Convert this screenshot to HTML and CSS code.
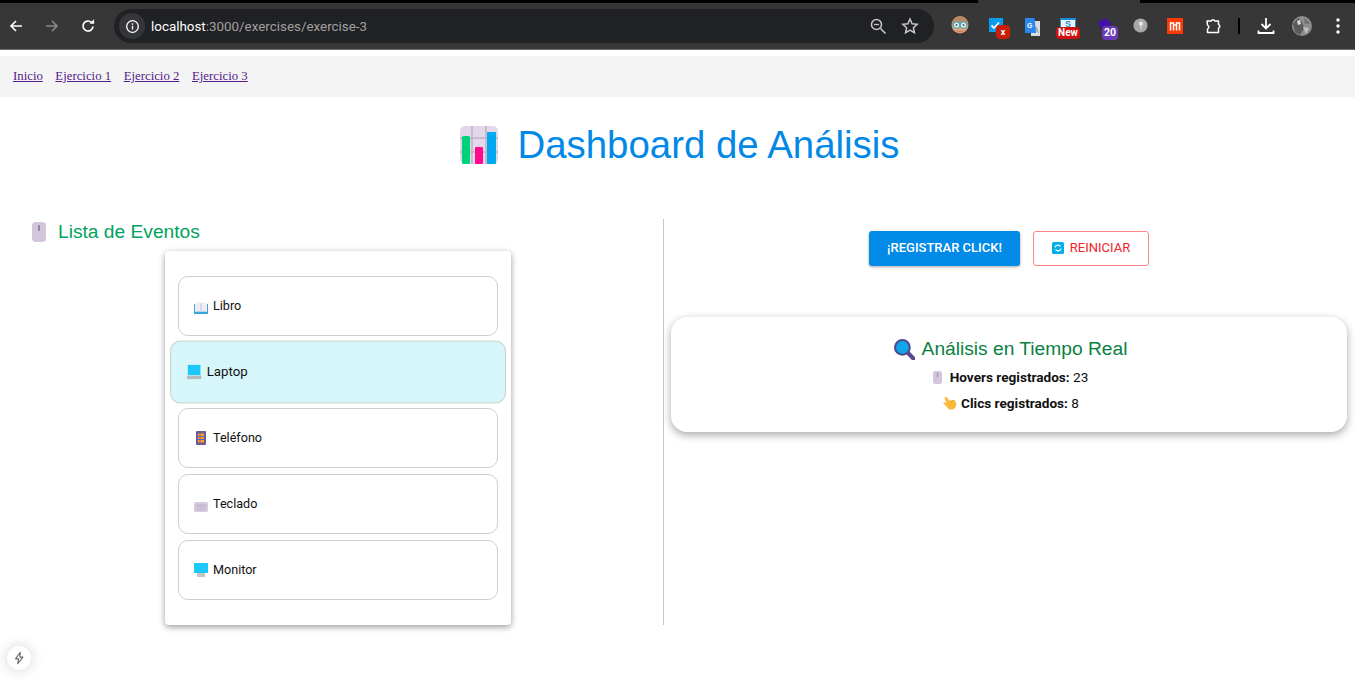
FILE: index.html
```html
<!DOCTYPE html>
<html lang="es">
<head>
<meta charset="utf-8">
<title>Dashboard de Análisis</title>
<link rel="stylesheet" href="styles.css">
</head>
<body>
<div class="chrome">
  <div class="topstrip"><span class="tab-gap"></span></div>
  <div class="toolbar">
    <svg class="nav-ic" viewBox="0 0 16 16"><path d="M14 8H3M8 3L3 8l5 5" fill="none" stroke="#fff" stroke-width="1.6"/></svg>
    <svg class="nav-ic forward" viewBox="0 0 16 16"><path d="M2 8h11M8 3l5 5-5 5" fill="none" stroke="#8a8a8a" stroke-width="1.6"/></svg>
    <svg class="nav-ic reload" viewBox="0 0 16 16"><path d="M13 8.500A5 5 0 1 1 11.500 4.400" fill="none" stroke="#fff" stroke-width="1.700"/><path d="M9.500 5.800h4.600V1.200z" fill="#fff"/></svg>
    <div class="omnibox">
      <span class="site-info"><svg viewBox="0 0 16 16" width="15" height="15"><circle cx="8" cy="8" r="6.200" fill="none" stroke="#fff" stroke-width="1.400"/><path d="M8 7.200v4M8 4.500v1.500" stroke="#fff" stroke-width="1.500"/></svg></span>
      <span class="url"><span class="host">localhost</span>:3000/exercises/exercise-3</span>
      <svg class="omni-ic" viewBox="0 0 18 18"><circle cx="7.500" cy="7.500" r="5" fill="none" stroke="#c7c7c7" stroke-width="1.500"/><path d="M11.500 11.500l5 5" stroke="#c7c7c7" stroke-width="1.600"/><path d="M5 7.500h5" stroke="#c7c7c7" stroke-width="1.300"/></svg>
      <svg class="omni-ic star" viewBox="0 0 18 18"><path d="M9 2l2.100 4.700 5.100.6-3.800 3.400 1 5L9 13.200l-4.400 2.500 1-5L1.800 7.300l5.100-.6z" fill="none" stroke="#c7c7c7" stroke-width="1.500"/></svg>
    </div>
    <div class="extensions">
      <svg class="ext ext-face" viewBox="0 0 18 18"><circle cx="9" cy="9" r="8.500" fill="#dd9f7d"/><path d="M1 8a8 8 0 0 1 16 0z" fill="#b78a68"/><path d="M1 9h16" stroke="#53a7b5"/><circle cx="5.500" cy="9" r="3.200" fill="#dff0f4" stroke="#53a7b5" stroke-width="1.200"/><circle cx="12.500" cy="9" r="3.200" fill="#dff0f4" stroke="#53a7b5" stroke-width="1.200"/><circle cx="5.500" cy="9" r="1" fill="#555"/><circle cx="12.500" cy="9" r="1" fill="#555"/><path d="M6 15c2 1 4 1 6 0" stroke="#c9724f" fill="none"/></svg>
      <span class="ext ext-check"><svg class="check-box" viewBox="0 0 14 14"><rect width="14" height="14" fill="#0b9bee"/><path d="M2.500 7.500l2.500 2.500 5-5.500" fill="none" stroke="#fff" stroke-width="1.800"/></svg><span class="badge badge-x">x</span></span>
      <svg class="ext ext-translate" viewBox="0 0 16 18"><rect x="7" y="3" width="9" height="15" fill="#d8dde0"/><path d="M9.500 15l2.500-6 2.500 6M10.500 13h3" stroke="#8d979d" fill="none"/><path d="M1 0h9.500L12 15H1z" fill="#2b86f0"/><text x="3" y="10" class="ext-g">G</text></svg>
      <span class="ext ext-new"><span class="new-top"><span class="new-s">S</span></span><span class="badge badge-new">New</span></span>
      <span class="ext ext-20"><svg class="gem" viewBox="0 0 18 14"><path d="M9 0l8 6-8 6-8-6z" fill="#4310a8"/><path d="M1 8l8 6 8-6-8 4z" fill="#2d1380"/></svg><span class="badge badge-20">20</span></span>
      <svg class="ext ext-pin" viewBox="0 0 16 16"><circle cx="8" cy="8" r="7.500" fill="#a7a7a7"/><circle cx="8.500" cy="6" r="2.200" fill="#e6e6e6"/><path d="M8.500 7v5" stroke="#e6e6e6"/></svg>
      <svg class="ext ext-red" viewBox="0 0 16 16"><rect width="16" height="16" fill="#f93a06"/><path d="M3.500 12.500V5h3v7.500M9.500 12.500V5h3v7.500M6.500 7h3" fill="none" stroke="#fff" stroke-width="1.500"/></svg>
      <svg class="ext ext-puzzle" viewBox="0 0 18 18"><path d="M3 4h4.200a1.900 1.900 0 0 1 3.600 0H14.500v3.500a1.900 1.900 0 0 1 0 3.600V15.500H3.500v-3.400a2.200 2.200 0 0 0 0-4z" fill="none" stroke="#fff" stroke-width="1.500" stroke-linejoin="round"/></svg>
      <span class="sep"></span>
      <svg class="ext ext-dl" viewBox="0 0 18 18"><path d="M9 1v10M4.500 7L9 11.500 13.500 7M1.500 13.500v2.500h15v-2.500" fill="none" stroke="#fff" stroke-width="1.800"/></svg>
      <svg class="ext ext-avatar" viewBox="0 0 20 20"><circle cx="10" cy="10" r="10" fill="#8d8d8d"/><path d="M1 8l5-6 4 4 2 6-4 7-5-3z" fill="#5a5a5a"/><path d="M5 5l3-1 1 4-3 1z" fill="#dcdcdc"/><path d="M11 11l6 1-3 6z" fill="#c2c2c2"/><path d="M12 2l6 5-5 1z" fill="#6f6f6f"/></svg>
      <svg class="ext ext-menu" viewBox="0 0 4 16"><circle cx="2" cy="2" r="1.700" fill="#fff"/><circle cx="2" cy="8" r="1.700" fill="#fff"/><circle cx="2" cy="14" r="1.700" fill="#fff"/></svg>
    </div>
  </div>
</div>

<nav class="site-nav">
  <a href="#inicio">Inicio</a>
  <a href="#e1">Ejercicio 1</a>
  <a href="#e2">Ejercicio 2</a>
  <a href="#e3">Ejercicio 3</a>
</nav>

<main>
  <h1 class="page-title">
    <svg class="title-ic" viewBox="0 0 38 38"><rect width="38" height="38" rx="5" fill="#e3d8ea"/><path d="M12 0v38M26 0v38M0 12h38M0 26h38" stroke="#bdb3c4" stroke-width="1.500"/><rect x="2" y="10" width="8" height="28" rx="1.500" fill="#00d27a"/><rect x="15" y="21" width="8" height="17" rx="1" fill="#ff0a8c"/><rect x="27" y="6" width="9" height="32" rx="1" fill="#02a9f1"/></svg>
    <span>Dashboard de Análisis</span>
  </h1>

  <div class="columns">
    <section class="col-left">
      <h2 class="list-title">
        <svg class="mouse-lg" viewBox="0 0 14 20"><rect width="14" height="20" rx="4" fill="#d3c6dc"/><rect x="6" y="3" width="2" height="6" rx="1" fill="#8f8698"/></svg>
        <span>Lista de Eventos</span>
      </h2>
      <ul class="event-card">
        <li class="event">
          <svg class="ev-ic low" viewBox="0 0 14 12"><path d="M0 2h14v10H0z" fill="#3aa7dc"/><path d="M1 1c2-1 5-1 6 0 1-1 4-1 6 0v9c-2-.7-5-.7-6 0-1-.7-4-.7-6 0z" fill="#f1ecf5"/><path d="M7 1v9" stroke="#c9bfd1"/></svg>
          <span>Libro</span>
        </li>
        <li class="event active">
          <svg class="ev-ic" viewBox="0 0 14 14"><rect x="1" y="0" width="12" height="10" fill="#1cc8fb"/><path d="M0 10.500h14V14H0z" fill="#b9b9bc"/></svg>
          <span>Laptop</span>
        </li>
        <li class="event">
          <svg class="ev-ic" viewBox="0 0 14 14"><rect x="2" y="0" width="10" height="14" rx="1" fill="#6a5a96"/><rect x="4" y="2.500" width="6" height="9" fill="#f5a623"/><path d="M4 5.500h6M4 8.500h6" stroke="#3b6fd0"/><path d="M6 2.500v9" stroke="#d63d7c"/></svg>
          <span>Teléfono</span>
        </li>
        <li class="event">
          <svg class="ev-ic lower" viewBox="0 0 14 10"><rect width="14" height="10" rx="1.500" fill="#d6cbdf"/><path d="M2 3h10M2 5h10M3 7.500h8" stroke="#bcb0c6"/></svg>
          <span>Teclado</span>
        </li>
        <li class="event">
          <svg class="ev-ic" viewBox="0 0 14 14"><rect width="14" height="10" fill="#1cc8fb"/><rect x="3" y="10" width="8" height="4" fill="#c4c4c6"/></svg>
          <span>Monitor</span>
        </li>
      </ul>
    </section>

    <section class="col-right">
      <div class="actions">
        <button class="btn btn-primary">¡Registrar Click!</button>
        <button class="btn btn-outline">
          <svg class="refresh" viewBox="0 0 12 12"><rect width="12" height="12" rx="1.500" fill="#06aee8"/><path d="M3 5.500A3 3 0 0 1 8.500 4.500M9 6.500A3 3 0 0 1 3.500 7.500" fill="none" stroke="#fff" stroke-width="1.200"/></svg>
          <span>Reiniciar</span>
        </button>
      </div>
      <div class="analysis">
        <h3 class="analysis-title">
          <svg class="lens" viewBox="0 0 20 20"><path d="M12 12l6.500 6.500" stroke="#5a4a8c" stroke-width="4" stroke-linecap="round"/><circle cx="8" cy="8" r="7" fill="#10a5e8" stroke="#4d4a8e" stroke-width="2"/></svg>
          <span>Análisis en Tiempo Real</span>
        </h3>
        <p class="stat">
          <svg class="mouse-sm" viewBox="0 0 9 13"><rect width="9" height="13" rx="2.500" fill="#d3c6dc"/><rect x="3.800" y="2" width="1.400" height="4" fill="#a69cae"/></svg>
          <span><strong>Hovers registrados:</strong> 23</span>
        </p>
        <p class="stat">
          <svg class="hand" viewBox="0 0 16 14"><path d="M3 1.200c1-.6 1.800-.2 2.300.5L7.500 5l1-.8 1.200.3 1-.6 1.300.4 1 .2 1.500 3.500-1 3.500-2.500 2H7L4 10 1.500 7.500c-.4-.7.300-1.500 1.200-1.200l2 1.200L2.700 3c-.3-.7-.2-1.400.3-1.800z" fill="#fbb93a"/><path d="M8.500 4.500l1 2M11 4l.7 2" stroke="#d9901f" stroke-width=".7"/></svg>
          <span><strong>Clics registrados:</strong> 8</span>
        </p>
      </div>
    </section>
  </div>
</main>

<button class="dev-indicator" aria-label="Next.js">
  <svg viewBox="0 0 16 16" width="14" height="14"><path d="M9.500 1.500L4 9h3.500l-1 5.500L12.500 7H9z" fill="none" stroke="#666" stroke-width="1.200" stroke-linejoin="round"/></svg>
</button>
</body>
</html>
```
FILE: styles.css
```css
* { box-sizing: border-box; }
html, body { margin: 0; height: 680px; overflow: hidden; background: #fff; }
body { font-family: "Liberation Sans", Arial, sans-serif; position: relative; }

/* browser chrome */
.chrome { height: 56px; background: #fff; }
.topstrip { height: 3px; background: #000; display: flex; justify-content: flex-end; padding-right: 215px; }
.tab-gap { width: 162px; background: #373737; }
.toolbar { height: 47px; background: #373737; border-bottom: 1px solid #6b6b6b; display: flex; align-items: center; padding: 0 0 0 8px; }
.nav-ic { width: 16px; height: 16px; flex: none; }
.forward { margin-left: 20px; }
.reload { margin-left: 20px; }
.omnibox { margin-left: 18px; width: 820px; height: 34px; background: #202124; border-radius: 17px; display: flex; align-items: center; padding-left: 5px; color: #a0a0a0; font: 13.4px "Roboto", sans-serif; flex: none; }
.site-info { width: 26px; height: 26px; border-radius: 13px; background: #35363a; display: flex; align-items: center; justify-content: center; flex: none; }
.url { margin-left: 6px; flex: 1; }
.host { color: #fff; }
.omni-ic { width: 18px; height: 18px; flex: none; margin-right: 14px; }
.star { margin-right: 15px; }
.extensions { display: flex; align-items: center; flex: 1; height: 100%; }
.ext { flex: none; display: block; position: relative; }
.ext-face { width: 18px; height: 18px; margin-left: 17px; margin-bottom: 2px; }
.ext-check { width: 21px; height: 21px; margin-left: 20px; margin-top: 5px; }
.check-box { position: absolute; left: 0; top: 0; width: 14px; height: 14px; }
.ext-translate { width: 16px; height: 18px; margin-left: 14px; margin-top: 1px; }
.ext-g { font: bold 7px "Liberation Sans", sans-serif; fill: #fff; }
.ext-new { width: 24px; height: 22px; margin-left: 16px; margin-top: 5px; }
.new-top { display: block; width: 16px; height: 10px; margin-left: 4px; background: #eef6fb; border: 1px solid #1a8fd6; border-top-width: 2px; overflow: hidden; }
.new-s { display: block; color: #1a8fd6; font: bold 9px/8px "Liberation Sans", sans-serif; text-align: center; }
.ext-20 { width: 22px; height: 22px; margin-left: 16px; margin-top: 5px; }
.gem { position: absolute; left: 0; top: 0; width: 17px; height: 13px; }
.ext-pin { width: 15px; height: 15px; margin-left: 15px; margin-bottom: 1px; }
.ext-red { width: 16px; height: 16px; margin-left: 19px; margin-bottom: 1px; }
.ext-puzzle { width: 18px; height: 18px; margin-left: 21px; }
.sep { width: 2px; height: 16px; background: #000; margin-left: 16px; flex: none; }
.ext-dl { width: 18px; height: 18px; margin-left: 17px; }
.ext-avatar { width: 20px; height: 20px; margin-left: 17px; }
.ext-menu { width: 4px; height: 16px; margin-left: 24px; }
.badge { position: absolute; color: #fff; font: bold 9px/12px "Roboto", sans-serif; text-align: center; border-radius: 4px; }
.badge-x { left: 7px; top: 7px; width: 14px; height: 14px; background: #c91f06; line-height: 14px; }
.badge-new { left: 0; top: 9px; width: 24px; height: 12px; background: #d10f0f; font-size: 10px; line-height: 12px; }
.badge-20 { left: 6px; top: 8px; width: 16px; height: 14px; background: #6a3ab8; font-size: 10.5px; line-height: 14px; }

/* site nav */
.site-nav { height: 41px; background: #f4f4f4; display: flex; align-items: center; gap: 12.5px; padding: 0 13px; font: 12.8px "Liberation Serif", serif; }
.site-nav a { color: #551a8b; }

/* page */
.page-title { margin: 0; height: 96px; display: flex; align-items: center; justify-content: center; gap: 19px; padding-left: 5px; font-size: 38.4px; font-weight: 400; color: #0288e6; }
.title-ic { width: 38px; height: 38px; flex: none; }
.columns { display: flex; margin-top: 26px; height: 406px; }
.col-left { width: 664px; border-right: 1px solid #c8c8c8; flex: none; display: flex; flex-direction: column; }
.list-title { margin: 0; height: 32px; padding: 0 0 6px 32px; display: flex; align-items: center; gap: 12px; font-size: 19.2px; font-weight: 400; color: #00a35c; }
.mouse-lg { width: 14px; height: 20px; flex: none; }
.event-card { list-style: none; margin: 0 0 0 165px; padding: 25px 13px; width: 346px; height: 374px; background: #fff; border-radius: 4px; box-shadow: 0 2px 6px rgba(0,0,0,.4); display: flex; flex-direction: column; gap: 6px; }
.event { height: 60px; flex: none; border: 1px solid #cfcfcf; border-radius: 10px; display: flex; align-items: center; gap: 5px; padding: 0 0 1px 15px; font: 12.6px "Roboto", sans-serif; color: #111; }
.event.active { background: #d6f6fa; transform: scale(1.05); }
.ev-ic { width: 14px; height: 14px; flex: none; }
.ev-ic.low { margin-top: 4px; }
.ev-ic.lower { margin-top: 6px; }
.col-right { flex: 1; display: flex; flex-direction: column; align-items: center; padding: 12px 8px 0 7px; }
.actions { display: flex; gap: 13px; }
.btn { height: 35px; border-radius: 3px; font: 500 13px "Roboto", sans-serif; text-transform: uppercase; display: flex; align-items: center; justify-content: center; padding: 0 0 2px; cursor: pointer; }
.btn-primary { width: 151px; background: #028be6; color: #fff; border: 0; box-shadow: 0 1px 3px rgba(0,0,0,.35); }
.btn-outline { width: 116px; background: #fff; color: #f2222b; border: 1px solid #ff8585; gap: 6px; font-weight: 400; }
.refresh { width: 12px; height: 12px; flex: none; }
.analysis { margin-top: 51px; width: 676px; height: 115px; background: #fff; border-radius: 16px; box-shadow: 0 3px 8px rgba(0,0,0,.35); display: flex; flex-direction: column; align-items: center; padding-top: 20px; }
.analysis-title { margin: 0 0 6px; height: 24px; display: flex; align-items: center; gap: 7px; padding-left: 3px; font-size: 19.2px; font-weight: 400; color: #0b7f3f; }
.lens { width: 21px; height: 21px; flex: none; }
.stat { margin: 0 0 6px; height: 20px; display: flex; align-items: center; padding-left: 3px; font: 13.6px "Roboto", sans-serif; color: #111; white-space: pre; }
.stat strong { font-weight: 700; }
.mouse-sm { width: 9px; height: 13px; margin-right: 8px; flex: none; }
.hand { width: 16px; height: 14px; margin-right: 3px; flex: none; }

.dev-indicator { position: absolute; left: 7px; top: 646px; width: 24px; height: 24px; border-radius: 50%; border: 0; background: #fff; box-shadow: 0 0 14px rgba(0,0,0,.18); padding: 0; display: flex; align-items: center; justify-content: center; }
```
